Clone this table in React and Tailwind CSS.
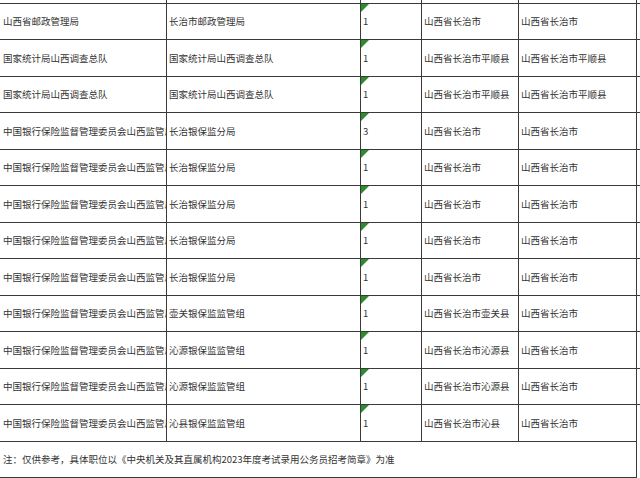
const rows = [
  ['山西省邮政管理局', '长治市邮政管理局', '1', '山西省长治市', '山西省长治市'],
  ['国家统计局山西调查总队', '国家统计局山西调查总队', '1', '山西省长治市平顺县', '山西省长治市平顺县'],
  ['国家统计局山西调查总队', '国家统计局山西调查总队', '1', '山西省长治市平顺县', '山西省长治市平顺县'],
  ['中国银行保险监督管理委员会山西监管局', '长治银保监分局', '3', '山西省长治市', '山西省长治市'],
  ['中国银行保险监督管理委员会山西监管局', '长治银保监分局', '1', '山西省长治市', '山西省长治市'],
  ['中国银行保险监督管理委员会山西监管局', '长治银保监分局', '1', '山西省长治市', '山西省长治市'],
  ['中国银行保险监督管理委员会山西监管局', '长治银保监分局', '1', '山西省长治市', '山西省长治市'],
  ['中国银行保险监督管理委员会山西监管局', '长治银保监分局', '1', '山西省长治市', '山西省长治市'],
  ['中国银行保险监督管理委员会山西监管局', '壶关银保监监管组', '1', '山西省长治市壶关县', '山西省长治市'],
  ['中国银行保险监督管理委员会山西监管局', '沁源银保监监管组', '1', '山西省长治市沁源县', '山西省长治市'],
  ['中国银行保险监督管理委员会山西监管局', '沁源银保监监管组', '1', '山西省长治市沁源县', '山西省长治市'],
  ['中国银行保险监督管理委员会山西监管局', '沁县银保监监管组', '1', '山西省长治市沁县', '山西省长治市'],
]

const widths = ['w-[167px]', 'w-[194px]', 'w-[61px]', 'w-[97px]', 'w-[118px]']

function Corner() {
  return (
    <span className="absolute left-0 top-0 h-0 w-0 border-l-[4px] border-t-[4px] border-l-[#2e8b2e] border-t-[#2e8b2e] border-r-[4px] border-r-transparent border-b-[4px] border-b-transparent" />
  )
}

function Row({ cells, tall }) {
  return (
    <div className={`flex border-t border-[#3a3a3a] ${tall ? 'h-[37px]' : 'h-[36px]'}`}>
      {cells.map((text, i) => (
        <div
          key={i}
          className={`relative flex shrink-0 items-center overflow-hidden whitespace-nowrap border-r border-[#3a3a3a] ${widths[i]} ${i === 0 ? 'pl-[3px]' : 'pl-[2px]'}`}
        >
          {i === 2 && <Corner />}
          <span>{text}</span>
        </div>
      ))}
    </div>
  )
}

export default function App() {
  return (
    <div
      className="h-[478px] w-[640px] overflow-hidden bg-white text-[9.5px] text-[#333]"
      style={{ fontFamily: '"Noto Sans CJK SC", "Noto Sans", sans-serif' }}
    >
      <div className="flex h-[3px]">
        {widths.map((w, i) => (
          <div key={i} className={`relative shrink-0 border-r border-[#3a3a3a] ${w}`} />
        ))}
      </div>
      {rows.map((r, i) => (
        <Row key={i} cells={r} tall={i % 2 === 1} />
      ))}
      <div className="flex h-[37px] w-[637px] items-center border-y border-r border-[#3a3a3a] pl-[3px]">
        注：仅供参考，具体职位以《中央机关及其直属机构2023年度考试录用公务员招考简章》为准
      </div>
    </div>
  )
}
